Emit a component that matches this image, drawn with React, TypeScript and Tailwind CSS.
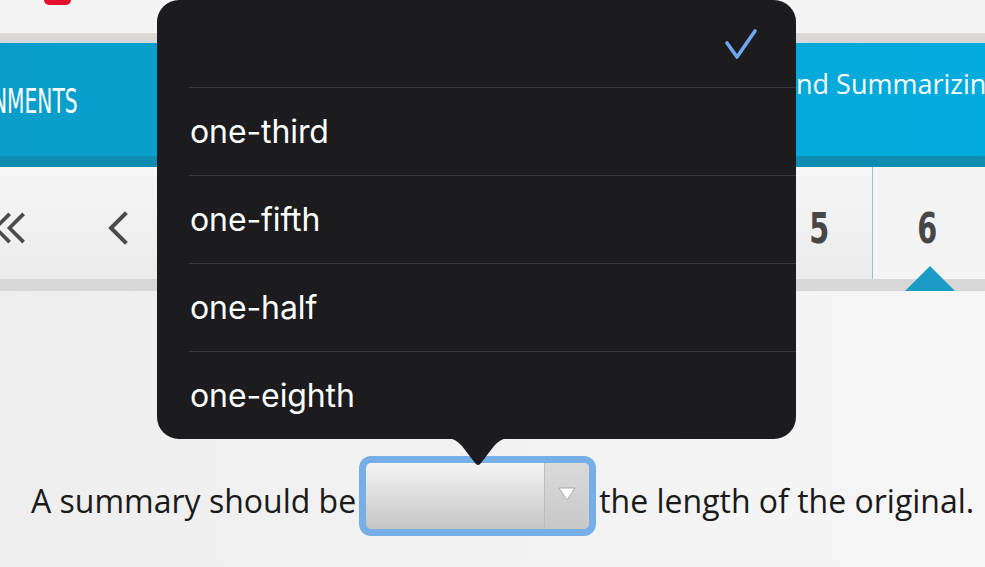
const menuItems = ["one-third", "one-fifth", "one-half", "one-eighth"];

function Chevron({ className }: { className?: string }) {
  return (
    <svg viewBox="0 0 24 34" className={className} fill="none" stroke="#4a4a4a" strokeWidth="4" strokeLinecap="square">
      <path d="M20 3 L6 17 L20 31" />
    </svg>
  );
}

function PopupMenu() {
  return (
    <div className="absolute left-[157px] top-0 w-[639px]">
      <div className="h-[439px] rounded-[22px] bg-[#1c1c1e] overflow-hidden">
        <div className="h-[87px] flex items-start justify-end pr-[38px] pt-[28px]">
          <svg width="34" height="32" viewBox="0 0 34 32" fill="none" stroke="#6ea8f0" strokeWidth="3.6" strokeLinecap="round" strokeLinejoin="round">
            <path d="M3 15 L13 29 L31 3" />
          </svg>
        </div>
        {menuItems.map((item) => (
          <div key={item} className="ml-[32px] h-[88px] border-t border-[#3a3a3c] flex items-center pl-[1px] text-[32px] text-white font-['Inter',sans-serif] tracking-[-0.1px]">
            {item}
          </div>
        ))}
      </div>
      <svg className="absolute left-[289px] top-[438px]" width="64" height="28" viewBox="0 0 64 28">
        <path d="M0 0 H64 C56 0 52 4 48 8 L35 25 Q32 29 29 25 L16 8 C12 4 8 0 0 0 Z" fill="#1c1c1e" />
      </svg>
    </div>
  );
}

function SelectBox() {
  return (
    <div className="w-[237px] h-[80px] rounded-[12px] bg-[#76aee6] p-[7px] shrink-0">
      <div className="h-full rounded-[5px] flex overflow-hidden bg-gradient-to-b from-[#f4f4f4] to-[#c5c5c5]">
        <div className="flex-1" />
        <div className="w-[45px] border-l border-[#bcbcbc] bg-gradient-to-b from-[#dadada] to-[#c8c8c8] flex items-center justify-center pb-[4px]">
          <svg width="18" height="14" viewBox="0 0 18 14">
            <path d="M1 1 H17 L9 13 Z" fill="#ffffff" stroke="#a9a9a9" strokeWidth="1" strokeLinejoin="round" />
          </svg>
        </div>
      </div>
    </div>
  );
}

export default function App() {
  return (
    <div className="relative w-[985px] h-[567px] overflow-hidden bg-gradient-to-r from-[#eeeeee] via-[#f2f2f2] to-[#f6f6f6] font-['Open_Sans',sans-serif]">
      <div className="h-[33px] bg-[#f4f4f4] pl-[44px]">
        <div className="w-[27px] h-[5px] rounded-b-full bg-[#e3112e]" />
      </div>
      <div className="h-[10px] bg-gradient-to-b from-[#dcd9d5] to-[#d6d8db]" />
      <div className="h-[113px] bg-gradient-to-r from-[#0a9dca] to-[#02acdd] flex">
        <div className="w-[78px] pt-[42px] flex justify-end overflow-hidden">
          <span className="whitespace-nowrap text-[33px] leading-[34px] text-white font-['Liberation_Sans_Narrow','DejaVu_Sans_Condensed',sans-serif] scale-x-[0.68] origin-right">
            ASSIGNMENTS
          </span>
        </div>
        <div className="flex-1 pl-[703px] pt-[21px] overflow-hidden">
          <span className="whitespace-nowrap text-[27px] text-white font-['Open_Sans',sans-serif]">
            and Summarizing
          </span>
        </div>
      </div>
      <div className="h-[11px] bg-[#0f8db0]" />
      <div className="relative h-[112px] flex pt-[10px] bg-gradient-to-b from-[#f6f6f6] to-[#ebebeb]">
        <div className="w-[80px] flex items-center -ml-[10px]">
          <Chevron className="w-[22px] h-[34px]" />
          <Chevron className="w-[22px] h-[34px] -ml-[8px]" />
        </div>
        <div className="w-[70px] flex items-center pl-[35px]">
          <Chevron className="w-[24px] h-[34px]" />
        </div>
        <div className="flex-1" />
        <div className="w-[85px] flex items-center justify-start pl-[19px] text-[42px] font-bold text-[#474747] font-['Liberation_Sans_Narrow','DejaVu_Sans_Condensed',sans-serif]">
          <span className="inline-block scale-x-[0.76]">5</span>
        </div>
        <div className="w-[113px] -mt-[10px] pt-[10px] border-l border-[#a4bcc4] bg-[#f4f4f4] flex items-center justify-center pr-[4px] text-[42px] font-bold text-[#474747] font-['Liberation_Sans_Narrow','DejaVu_Sans_Condensed',sans-serif]">
          <span className="inline-block scale-x-[0.76]">6</span>
        </div>
      </div>
      <div className="relative h-[12px] bg-[#d7d7d7]">
        <svg className="absolute left-[905px] -top-[13px]" width="50" height="25" viewBox="0 0 50 25">
          <path d="M0 25 L25 0 L50 25 Z" fill="#1a9cc4" />
        </svg>
      </div>
      <div className="mt-[165px] h-[80px] flex items-center pl-[31px] text-[32px] text-[#1a1a1a]">
        <span className="whitespace-nowrap pt-[9px]">A summary should be</span>
        <div className="ml-[3px]">
          <SelectBox />
        </div>
        <span className="whitespace-nowrap pt-[9px] ml-[3px]">the length of the original.</span>
      </div>
      <PopupMenu />
    </div>
  );
}
